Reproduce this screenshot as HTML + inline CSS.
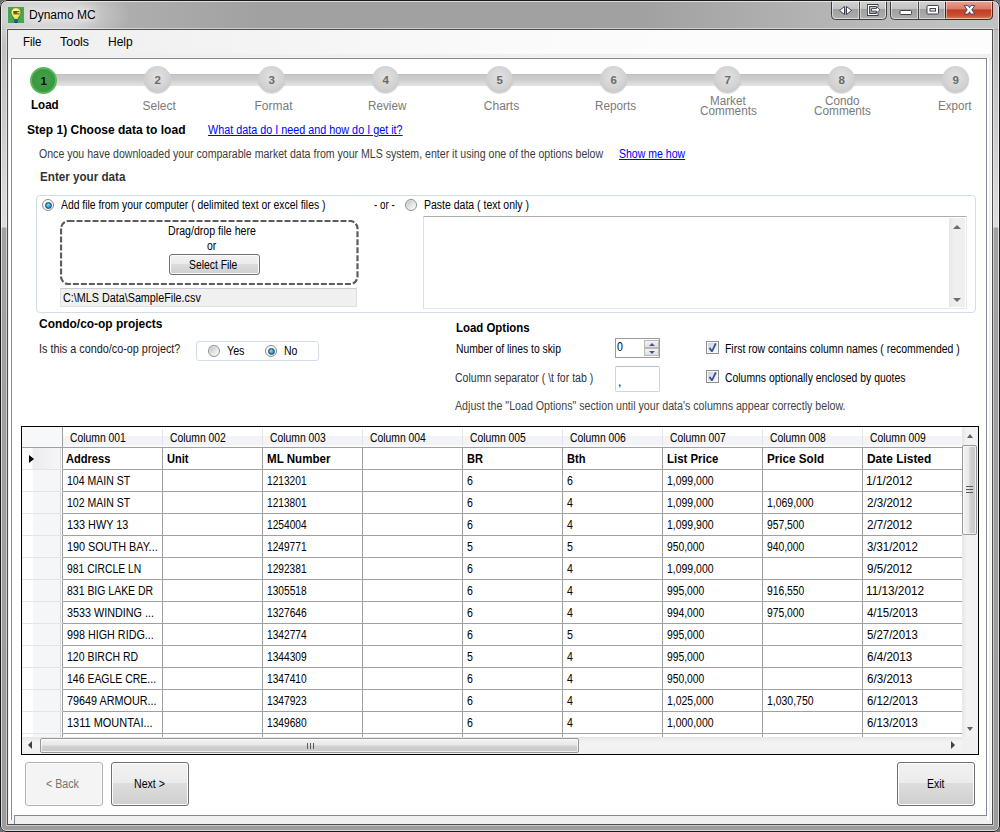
<!DOCTYPE html>
<html lang="en"><head><meta charset="utf-8"><title>Dynamo MC</title>
<style>
*{box-sizing:border-box}
html,body{margin:0;padding:0}
body{width:1000px;height:832px;overflow:hidden;background:#6e6e6e;font-family:"Liberation Sans",sans-serif;font-size:11px;color:#000}
#win{position:absolute;left:0;top:0;width:1000px;height:832px;border-radius:7px 7px 6px 6px;overflow:hidden;
 background:linear-gradient(180deg,#a1a1a1 0,#a1a1a1 30px,#bcbcbc 30px,#dedede 227px,#a2a2a2 228px,#9c9c9c 100%)}
#win:before{content:"";position:absolute;left:1px;top:1px;right:1px;bottom:1px;border:1px solid rgba(255,255,255,.62);border-radius:6px 6px 5px 5px;z-index:3;pointer-events:none}
#win:after{content:"";position:absolute;left:0;top:0;right:0;bottom:0;border:1px solid #1a1a1a;border-radius:7px 7px 6px 6px;z-index:4;pointer-events:none}
#tglow{position:absolute;left:-40px;top:-22px;width:170px;height:74px;background:radial-gradient(ellipse closest-side at center,rgba(224,224,224,.95) 0,rgba(222,222,222,.9) 45%,rgba(210,210,210,.5) 72%,rgba(190,190,190,0) 100%)}
#tright{position:absolute;left:0;top:0;width:1000px;height:29px;background:linear-gradient(90deg,rgba(205,205,205,.3) 0,rgba(205,205,205,.3) 120px,rgba(205,205,205,0) 260px,rgba(205,205,205,0) 640px,rgba(205,205,205,.75) 960px)}
#tbottom{position:absolute;left:0;top:825px;width:1000px;height:7px;background:#9d9d9d}
#inner{position:absolute;left:7px;top:29px;width:986px;height:796px;border:1px solid #4f4f4f;box-shadow:0 0 0 1px rgba(255,255,255,.45),inset -1px 0 0 #fff;background:#f0f0f0}
#panel{position:absolute;left:11px;top:58px;width:976px;height:762px;border:1px solid #828a99;border-bottom:0;background:#fff;box-shadow:2px 0 0 #fff,-2px 0 0 #fff}
#pbot{position:absolute;left:14px;top:815px;width:973px;height:9px;border-top:1px solid #828a99;border-left:1px solid #828a99;background:#f0f0f0}
#menu{position:absolute;left:8px;top:30px;width:984px;height:24px;background:linear-gradient(90deg,#f0f0f0 0,#f1f1f1 12%,#f5f5f5 30%,#fafafa 50%,#fcfcfc 70%,#fdfdfd 100%)}
.t{position:absolute;white-space:nowrap;line-height:1;z-index:5;transform-origin:0 0}
/* caption buttons */
.cap{position:absolute;top:0}
/* steps */
#steps{position:absolute;left:0;top:0}
.track{position:absolute;left:44px;top:73.5px;width:912px;height:12.5px;background:linear-gradient(180deg,#bdbdbd 0,#c8c8c8 12%,#cdcdcd 45%,#e3e3e3 100%)}
.dot{position:absolute;top:66px;width:27px;height:27px;border-radius:50%;background:radial-gradient(circle at 50% 40%,#e2e2e2 0,#d2d2d2 55%,#c0c0c0 100%);box-shadow:0 1px 1px rgba(0,0,0,.12);text-align:center}
.dot b{display:block;font-size:11.5px;line-height:29px;color:#6a6a6a;font-weight:700}
.dot.on{top:66.6px;background:radial-gradient(circle at 50% 45%,#43a048 0,#3a9840 70%,#369239 100%);border:2px solid #5ab85f;box-shadow:none}
.dot.on b{line-height:25px;color:#0a0a0a}
.slab{position:absolute;width:100px;text-align:center;font-size:12px;line-height:14px;color:#7a7a7a}
.slab.on{font-weight:700;color:#000;font-size:12px}
.slab.two{line-height:10px}
/* group boxes */
.gb{position:absolute;border:1px solid #d3dde6;border-radius:4px;background:#fff}
.radio{position:absolute;width:12px;height:12px;border-radius:50%;border:1px solid #8a8d90;background:linear-gradient(135deg,#b7bbbf 0,#dcdee0 45%,#f6f6f6 82%);box-shadow:inset 0 0 0 1px rgba(255,255,255,.55)}
.radio.on{background:#f6f6f6}
.radio.on:after{content:"";box-sizing:border-box;position:absolute;left:1.5px;top:1.5px;width:7px;height:7px;border-radius:50%;border:1.3px solid #1b415f;background:radial-gradient(circle at 42% 38%,#9fe3f7 0,#2f9fdb 45%,#1e7fbe 100%)}
.chk{position:absolute;width:13px;height:13px;border:1px solid #8e8f8f;background:linear-gradient(135deg,#c2c7d0 0,#e6e8ec 50%,#fbfbfb 100%);box-shadow:inset 0 0 0 1px #f8f8f8}
.chk svg{position:absolute;left:0;top:0}
.btn{position:absolute;border:1px solid #707070;border-radius:3px;box-shadow:inset 0 0 0 1px #fcfcfc;background:linear-gradient(180deg,#f2f2f2 0,#ebebeb 47%,#dddddd 48%,#cfcfcf 100%)}
.btn.dis{border-color:#adb2b5;background:#f4f4f4}
.drop{position:absolute;left:59.5px;top:219.5px}
.ro{position:absolute;left:60px;top:288px;width:297px;height:19px;background:#f0f0f0;border:1px solid #dcdfe4;border-top-color:#c8cbd2}
.ta{position:absolute;left:423px;top:216px;width:544px;height:93px;background:#fff;border:1px solid #e3e9ef;border-top-color:#abadb3;border-left-color:#dbdfe6;border-radius:1px}
.ta .sb{position:absolute;right:1px;top:1px;width:16px;bottom:1px;background:linear-gradient(90deg,#e6e6e6,#f0f0f0 35%,#efefef)}
.arr{position:absolute;width:0;height:0;border-style:solid}
.spin{position:absolute;left:615px;top:338px;width:45px;height:20px;border:1px solid #9b9b9b;background:#fff}
.spin .u,.spin .d{position:absolute;left:28px;width:15px;height:8px;border:1px solid #b9b9b9;background:linear-gradient(180deg,#f4f4f4,#dedede)}
.spin .u{top:1px}.spin .d{top:9px}
.sep{position:absolute;left:615px;top:366px;width:45px;height:26px;border:1px solid #c9d5e2;border-top-color:#b4bfcc;border-radius:2px;background:#fff}
/* grid */
#grid{position:absolute;left:21px;top:426px;width:958px;height:329px;border:1px solid #000;background:#fff;overflow:hidden;font-size:11px}
.ghead{position:absolute;left:0;top:0;width:940px;height:21px;border-bottom:1px solid #a0a0a0;background:linear-gradient(180deg,#fff 0,#fff 9px,#f3f4f7 9px,#f2f3f6 18px,#fbfbfc 18px,#fbfbfc 20px);overflow:hidden}
.corner{position:absolute;left:0;top:0;width:41px;height:20px;border-right:1px solid #a0a0a0;background:#f7f8fa}
.ch{position:absolute;top:2px;width:100px;height:17px;border-right:1px solid #e3e4e8}
.gr{position:absolute;left:0;width:940px;height:22px;overflow:hidden}
.gr.last{height:3px}
.rh{position:absolute;left:0;top:0;width:41px;height:22px;border-right:1px solid #a0a0a0;border-bottom:1px solid #e4e4e6;background:linear-gradient(90deg,#f6f6f6 0,#f6f6f6 1px,#fff 1px,#fff 11px,#f5f6f8 11px,#f5f6f8 38px,#d6d6d8 38px,#d6d6d8 39px,#fff 39px)}
.hd .rh{background:linear-gradient(90deg,#f6f6f6 0,#f6f6f6 1px,#fff 1px,#fff 10px,#ececee 11px,#f6f6f8 38px,#d6d6d8 38px,#d6d6d8 39px,#fff 39px)}
.rh i{position:absolute;left:7px;top:7px;width:0;height:0;border-style:solid;border-width:4.5px 0 4.5px 5px;border-color:transparent transparent transparent #000}
.c{position:absolute;top:0;width:100px;height:22px;border-right:1px solid #a0a0a0;border-bottom:1px solid #a0a0a0}
.vs{position:absolute;left:940px;top:0;width:16px;height:310px;background:linear-gradient(90deg,#e6e6e6,#f3f3f3 30%,#f0f0f0)}
.hs{position:absolute;left:0;top:310px;width:940px;height:17px;background:linear-gradient(180deg,#e6e6e6,#f3f3f3 30%,#f0f0f0)}
.scorner{position:absolute;left:940px;top:310px;width:16px;height:17px;background:#f0f0f0}
.thumbv{position:absolute;left:0;top:18px;width:15px;height:90px;border:1px solid #979797;border-radius:2px;background:linear-gradient(90deg,#f3f3f3 0,#e8e8e9 45%,#d1d1d3 55%,#c8c8ca 100%);box-shadow:inset 0 0 0 1px rgba(255,255,255,.7)}
.thumbh{position:absolute;left:18px;top:1px;width:539px;height:15px;border:1px solid #979797;border-radius:2px;background:linear-gradient(180deg,#f3f3f3 0,#e8e8e9 45%,#d1d1d3 55%,#c8c8ca 100%);box-shadow:inset 0 0 0 1px rgba(255,255,255,.7)}
.grip{position:absolute;background:#5a5a5a}

</style></head>
<body>
<div id="win">
<div id="tglow"></div><div id="tright"></div><div id="tbottom"></div>
<div id="inner"></div>
<div id="menu"></div>
<div id="panel"></div><div id="pbot"></div>
<!-- app icon -->
<svg style="position:absolute;left:8px;top:7px" width="16" height="16" viewBox="0 0 16 16">
<defs><radialGradient id="bulb" cx=".45" cy=".35" r=".75"><stop offset="0" stop-color="#fffbd0"/><stop offset=".45" stop-color="#fbee6e"/><stop offset="1" stop-color="#e9d23f"/></radialGradient></defs>
<rect width="16" height="16" fill="#47a64f"/>
<path d="M8 .6C4.900 .6 3 2.800 3 5.300c0 1.900 1 3.100 1.800 4.300.6.900 1 1.800 1.100 2.800h4.200c.1-1 .5-1.900 1.100-2.800C12 8.400 13 7.200 13 5.300 13 2.800 11.100 .6 8 .6z" fill="url(#bulb)" stroke="#2c6a35" stroke-width=".7"/>
<path d="M5.400 3.900h6v3.700h-6z" fill="#6a5b16" opacity=".92"/><path d="M9.300 5.100h2.200v1.200h-2.200z" fill="#f4e25a"/>
<path d="M5.400 4.900h3.300" stroke="#3a300a" stroke-width=".8"/>
<rect x="6" y="12.400" width="4" height="2.500" fill="#1c5ba3"/>
<path d="M6.300 14.900h3.400l-.7 1h-2z" fill="#0f3358"/>
</svg>
<!-- caption buttons -->
<svg class="cap" style="left:830px" width="166" height="21" viewBox="0 0 166 21">
<defs>
<linearGradient id="gb" x1="0" y1="0" x2="0" y2="1"><stop offset="0" stop-color="#d6d6d6"/><stop offset=".47" stop-color="#c3c3c3"/><stop offset=".5" stop-color="#9f9f9f"/><stop offset="1" stop-color="#b0b0b0"/></linearGradient>
<linearGradient id="gr" x1="0" y1="0" x2="0" y2="1"><stop offset="0" stop-color="#eda697"/><stop offset=".47" stop-color="#d97a69"/><stop offset=".5" stop-color="#c13c21"/><stop offset=".8" stop-color="#cb5033"/><stop offset="1" stop-color="#de8663"/></linearGradient>
</defs>
<!-- group 1 -->
<path d="M1.500 -1V15.500a4 4 0 0 0 4 4H52.500a4 4 0 0 0 4-4V-1z" fill="url(#gb)" stroke="#3e3e3e"/>
<path d="M2.500 0V15.300a3.200 3.200 0 0 0 3.200 3.200H52.300a3.200 3.200 0 0 0 3.200-3.200V0" fill="none" stroke="rgba(255,255,255,.55)"/>
<path d="M29.500 0V19" stroke="#4a4a4a"/><path d="M28.500 1V18M30.500 1V18" stroke="rgba(255,255,255,.45)"/>
<path d="M14.500 6.500v8l-5-4zM16.500 6.500v8l5-4z" fill="#fff" stroke="#3d4150" stroke-width="1" stroke-linejoin="round"/>
<path d="M47 7V5.500h-8.500v9h8.500V12.500" fill="none" stroke="#3d4150" stroke-width="3"/><path d="M47 7V5.500h-8.500v9h8.500V12.500" fill="none" stroke="#fff" stroke-width="1.200"/>
<path d="M41.500 8.500h5v-2l3.500 3.300-3.500 3.300v-2h-5z" fill="#fff" stroke="#3d4150" stroke-width=".9"/>
<!-- group 2 -->
<path d="M60.500 -1V15.500a4 4 0 0 0 4 4H158.500a4 4 0 0 0 4-4V-1z" fill="url(#gb)" stroke="#3e3e3e"/>
<path d="M115.500 0H162.500V15.500a4 4 0 0 1-4 4H115.500z" fill="url(#gr)" stroke="#5a1f14"/>
<path d="M61.500 0V15.300a3.200 3.200 0 0 0 3.200 3.200H158.300a3.200 3.200 0 0 0 3.200-3.200V0" fill="none" stroke="rgba(255,255,255,.5)"/>
<path d="M88.500 0V19" stroke="#4a4a4a"/><path d="M87.500 1V18M89.500 1V18" stroke="rgba(255,255,255,.45)"/>
<path d="M116.500 1V18" stroke="rgba(255,255,255,.45)"/><path d="M114.500 1V18" stroke="rgba(255,255,255,.45)"/>
<rect x="70" y="10.500" width="11.500" height="4" rx=".8" fill="#fff" stroke="#3d4150"/>
<rect x="97" y="5.500" width="11.500" height="8.500" rx=".8" fill="#fff" stroke="#3d4150"/><rect x="100" y="8.500" width="5.500" height="2.600" fill="#e8e8e8" stroke="#3d4150"/>
<path d="M134.200 5.600L138.300 5.600 139.500 7.800 140.700 5.600 144.800 5.600 141.800 9.800 144.800 14 140.700 14 139.500 11.800 138.300 14 134.200 14 137.200 9.800z" fill="#fff" stroke="#454b60" stroke-width="1" stroke-linejoin="round"/>
</svg>
<div id="steps"><div class="track"></div>
<div class="dot on" style="left:30.2px"><b>1</b></div>
<div class="dot" style="left:144.2px"><b>2</b></div>
<div class="dot" style="left:258.2px"><b>3</b></div>
<div class="dot" style="left:372.2px"><b>4</b></div>
<div class="dot" style="left:486.2px"><b>5</b></div>
<div class="dot" style="left:600.2px"><b>6</b></div>
<div class="dot" style="left:714.2px"><b>7</b></div>
<div class="dot" style="left:828.2px"><b>8</b></div>
<div class="dot" style="left:942.2px"><b>9</b></div></div>
<!-- enter-your-data group -->
<div class="gb" style="left:36px;top:195px;width:940px;height:118px"></div>
<div class="radio on" style="left:42px;top:199px"></div>
<div class="radio" style="left:405px;top:199px"></div>
<svg class="drop" width="299" height="66" viewBox="0 0 299 66"><rect x="1" y="1" width="296.500" height="63" rx="7.500" ry="7.500" fill="none" stroke="#5c5c5c" stroke-width="2.200" stroke-dasharray="6 2"/></svg>
<div class="btn" style="left:169px;top:254px;width:91px;height:21px"></div>
<div class="ro"></div>
<div class="ta"><div class="sb"><span class="arr" style="left:4px;top:6.500px;border-width:0 4px 4.300px 4px;border-color:transparent transparent #6d6d6d transparent"></span><span class="arr" style="left:4px;bottom:5.500px;border-width:4.300px 4px 0 4px;border-color:#6d6d6d transparent transparent transparent"></span></div></div>
<!-- condo group -->
<div class="gb" style="left:196px;top:341px;width:123px;height:20px;border-radius:3px"></div>
<div class="radio" style="left:208px;top:345px"></div>
<div class="radio on" style="left:265px;top:345px"></div>
<!-- load options -->
<div class="spin"><div class="u"><span class="arr" style="left:3.500px;top:1.500px;border-width:0 3px 3px 3px;border-color:transparent transparent #44549a transparent"></span></div><div class="d"><span class="arr" style="left:3.500px;top:1.500px;border-width:3px 3px 0 3px;border-color:#44549a transparent transparent transparent"></span></div></div>
<div class="sep"></div>
<div class="chk" style="left:706px;top:341px"><svg width="11" height="11" viewBox="0 0 11 11"><path d="M1.700 6.500L3.100 5.300 4.900 7.400 7.900 .9 9.700 1.700 5.600 9.900 4.300 9.900z" fill="#3c539b"/></svg></div>
<div class="chk" style="left:706px;top:370px"><svg width="11" height="11" viewBox="0 0 11 11"><path d="M1.700 6.500L3.100 5.300 4.900 7.400 7.900 .9 9.700 1.700 5.600 9.900 4.300 9.900z" fill="#3c539b"/></svg></div>
<!-- nav buttons -->
<div class="btn dis" style="left:25px;top:762px;width:78px;height:44px"></div>
<div class="btn" style="left:111px;top:762px;width:78px;height:44px"></div>
<div class="btn" style="left:897px;top:762px;width:78px;height:44px"></div>
<div id="grid">
<div class="ghead"><div class="corner"></div>
<div class="ch" style="left:41px"></div>
<div class="ch" style="left:141px"></div>
<div class="ch" style="left:241px"></div>
<div class="ch" style="left:341px"></div>
<div class="ch" style="left:441px"></div>
<div class="ch" style="left:541px"></div>
<div class="ch" style="left:641px"></div>
<div class="ch" style="left:741px"></div>
<div class="ch" style="left:841px"></div>
</div>
<div class="gr hd" style="top:21px"><div class="rh"><i></i></div>
<div class="c" style="left:41px"></div>
<div class="c" style="left:141px"></div>
<div class="c" style="left:241px"></div>
<div class="c" style="left:341px"></div>
<div class="c" style="left:441px"></div>
<div class="c" style="left:541px"></div>
<div class="c" style="left:641px"></div>
<div class="c" style="left:741px"></div>
<div class="c" style="left:841px"></div>
</div>
<div class="gr" style="top:43px"><div class="rh"></div>
<div class="c" style="left:41px"></div>
<div class="c" style="left:141px"></div>
<div class="c" style="left:241px"></div>
<div class="c" style="left:341px"></div>
<div class="c" style="left:441px"></div>
<div class="c" style="left:541px"></div>
<div class="c" style="left:641px"></div>
<div class="c" style="left:741px"></div>
<div class="c" style="left:841px"></div>
</div>
<div class="gr" style="top:65px"><div class="rh"></div>
<div class="c" style="left:41px"></div>
<div class="c" style="left:141px"></div>
<div class="c" style="left:241px"></div>
<div class="c" style="left:341px"></div>
<div class="c" style="left:441px"></div>
<div class="c" style="left:541px"></div>
<div class="c" style="left:641px"></div>
<div class="c" style="left:741px"></div>
<div class="c" style="left:841px"></div>
</div>
<div class="gr" style="top:87px"><div class="rh"></div>
<div class="c" style="left:41px"></div>
<div class="c" style="left:141px"></div>
<div class="c" style="left:241px"></div>
<div class="c" style="left:341px"></div>
<div class="c" style="left:441px"></div>
<div class="c" style="left:541px"></div>
<div class="c" style="left:641px"></div>
<div class="c" style="left:741px"></div>
<div class="c" style="left:841px"></div>
</div>
<div class="gr" style="top:109px"><div class="rh"></div>
<div class="c" style="left:41px"></div>
<div class="c" style="left:141px"></div>
<div class="c" style="left:241px"></div>
<div class="c" style="left:341px"></div>
<div class="c" style="left:441px"></div>
<div class="c" style="left:541px"></div>
<div class="c" style="left:641px"></div>
<div class="c" style="left:741px"></div>
<div class="c" style="left:841px"></div>
</div>
<div class="gr" style="top:131px"><div class="rh"></div>
<div class="c" style="left:41px"></div>
<div class="c" style="left:141px"></div>
<div class="c" style="left:241px"></div>
<div class="c" style="left:341px"></div>
<div class="c" style="left:441px"></div>
<div class="c" style="left:541px"></div>
<div class="c" style="left:641px"></div>
<div class="c" style="left:741px"></div>
<div class="c" style="left:841px"></div>
</div>
<div class="gr" style="top:153px"><div class="rh"></div>
<div class="c" style="left:41px"></div>
<div class="c" style="left:141px"></div>
<div class="c" style="left:241px"></div>
<div class="c" style="left:341px"></div>
<div class="c" style="left:441px"></div>
<div class="c" style="left:541px"></div>
<div class="c" style="left:641px"></div>
<div class="c" style="left:741px"></div>
<div class="c" style="left:841px"></div>
</div>
<div class="gr" style="top:175px"><div class="rh"></div>
<div class="c" style="left:41px"></div>
<div class="c" style="left:141px"></div>
<div class="c" style="left:241px"></div>
<div class="c" style="left:341px"></div>
<div class="c" style="left:441px"></div>
<div class="c" style="left:541px"></div>
<div class="c" style="left:641px"></div>
<div class="c" style="left:741px"></div>
<div class="c" style="left:841px"></div>
</div>
<div class="gr" style="top:197px"><div class="rh"></div>
<div class="c" style="left:41px"></div>
<div class="c" style="left:141px"></div>
<div class="c" style="left:241px"></div>
<div class="c" style="left:341px"></div>
<div class="c" style="left:441px"></div>
<div class="c" style="left:541px"></div>
<div class="c" style="left:641px"></div>
<div class="c" style="left:741px"></div>
<div class="c" style="left:841px"></div>
</div>
<div class="gr" style="top:219px"><div class="rh"></div>
<div class="c" style="left:41px"></div>
<div class="c" style="left:141px"></div>
<div class="c" style="left:241px"></div>
<div class="c" style="left:341px"></div>
<div class="c" style="left:441px"></div>
<div class="c" style="left:541px"></div>
<div class="c" style="left:641px"></div>
<div class="c" style="left:741px"></div>
<div class="c" style="left:841px"></div>
</div>
<div class="gr" style="top:241px"><div class="rh"></div>
<div class="c" style="left:41px"></div>
<div class="c" style="left:141px"></div>
<div class="c" style="left:241px"></div>
<div class="c" style="left:341px"></div>
<div class="c" style="left:441px"></div>
<div class="c" style="left:541px"></div>
<div class="c" style="left:641px"></div>
<div class="c" style="left:741px"></div>
<div class="c" style="left:841px"></div>
</div>
<div class="gr" style="top:263px"><div class="rh"></div>
<div class="c" style="left:41px"></div>
<div class="c" style="left:141px"></div>
<div class="c" style="left:241px"></div>
<div class="c" style="left:341px"></div>
<div class="c" style="left:441px"></div>
<div class="c" style="left:541px"></div>
<div class="c" style="left:641px"></div>
<div class="c" style="left:741px"></div>
<div class="c" style="left:841px"></div>
</div>
<div class="gr" style="top:285px"><div class="rh"></div>
<div class="c" style="left:41px"></div>
<div class="c" style="left:141px"></div>
<div class="c" style="left:241px"></div>
<div class="c" style="left:341px"></div>
<div class="c" style="left:441px"></div>
<div class="c" style="left:541px"></div>
<div class="c" style="left:641px"></div>
<div class="c" style="left:741px"></div>
<div class="c" style="left:841px"></div>
</div>
<div class="gr last" style="top:307px"><div class="rh"></div>
<div class="c" style="left:41px"></div>
<div class="c" style="left:141px"></div>
<div class="c" style="left:241px"></div>
<div class="c" style="left:341px"></div>
<div class="c" style="left:441px"></div>
<div class="c" style="left:541px"></div>
<div class="c" style="left:641px"></div>
<div class="c" style="left:741px"></div>
<div class="c" style="left:841px"></div>
</div>
<div class="vs"><span class="arr" style="left:4.800px;top:7px;border-width:0 3.600px 4.200px 3.600px;border-color:transparent transparent #606060 transparent"></span><div class="thumbv"><span class="grip" style="left:3px;top:40px;width:7px;height:1px"></span><span class="grip" style="left:3px;top:43px;width:7px;height:1px"></span><span class="grip" style="left:3px;top:46px;width:7px;height:1px"></span></div><span class="arr" style="left:4.800px;top:300px;border-width:4.200px 3.600px 0 3.600px;border-color:#606060 transparent transparent transparent"></span></div>
<div class="hs"><span class="arr" style="left:6px;top:4px;border-width:4px 4px 4px 0;border-color:transparent #404040 transparent transparent"></span><div class="thumbh"><span class="grip" style="left:266px;top:4px;width:1px;height:6px"></span><span class="grip" style="left:269px;top:4px;width:1px;height:6px"></span><span class="grip" style="left:272px;top:4px;width:1px;height:6px"></span></div><span class="arr" style="left:929px;top:4px;border-width:4px 0 4px 4px;border-color:transparent transparent transparent #404040"></span></div>
<div class="scorner"></div>

</div><div id="texts">
<span class="t" id="t0" style="left:29.0px;top:8.90px;font-size:12px;text-shadow:0 0 6px #fff,0 0 10px #fff;">Dynamo MC</span>
<span class="t" id="t1" style="left:23.0px;top:36.20px;font-size:12px;transform:scaleX(0.9500);">File</span>
<span class="t" id="t2" style="left:60.0px;top:36.20px;font-size:12px;transform:scaleX(1.0357);">Tools</span>
<span class="t" id="t3" style="left:108.0px;top:36.20px;font-size:12px;">Help</span>
<span class="t" id="t4" style="left:27.0px;top:123.96px;font-size:12.3px;font-weight:700;transform:scaleX(0.9790);">Step 1) Choose data to load</span>
<span class="t" id="t5" style="left:208.0px;top:123.96px;font-size:12.3px;color:#0000ff;transform:scaleX(0.8784);text-decoration:underline;">What data do I need and how do I get it?</span>
<span class="t" id="t6" style="left:39.0px;top:147.96px;font-size:12.3px;color:#3c3c3c;transform:scaleX(0.8597);">Once you have downloaded your comparable market data from your MLS system, enter it using one of the options below</span>
<span class="t" id="t7" style="left:618.5px;top:147.96px;font-size:12.3px;color:#0000ff;transform:scaleX(0.8557);text-decoration:underline;">Show me how</span>
<span class="t" id="t8" style="left:39.5px;top:170.96px;font-size:12.3px;font-weight:700;color:#333;transform:scaleX(0.9468);">Enter your data</span>
<span class="t" id="t9" style="left:61.0px;top:198.96px;font-size:12.3px;transform:scaleX(0.8430);">Add file from your computer ( delimited text or excel files )</span>
<span class="t" id="t10" style="left:374.0px;top:198.96px;font-size:12.3px;transform:scaleX(0.8000);">- or -</span>
<span class="t" id="t11" style="left:424.0px;top:198.96px;font-size:12.3px;transform:scaleX(0.8537);">Paste data ( text only )</span>
<span class="t" id="t12" style="left:168.0px;top:224.96px;font-size:12.3px;transform:scaleX(0.8627);">Drag/drop file here</span>
<span class="t" id="t13" style="left:207.0px;top:239.96px;font-size:12.3px;transform:scaleX(0.8500);">or</span>
<span class="t" id="t14" style="left:189.0px;top:258.96px;font-size:12.3px;transform:scaleX(0.8421);">Select File</span>
<span class="t" id="t15" style="left:63.0px;top:291.96px;font-size:12.3px;transform:scaleX(0.8765);">C:\MLS Data\SampleFile.csv</span>
<span class="t" id="t16" style="left:38.5px;top:317.96px;font-size:12.3px;font-weight:700;transform:scaleX(0.9717);">Condo/co-op projects</span>
<span class="t" id="t17" style="left:39.0px;top:342.96px;font-size:12.3px;color:#222;transform:scaleX(0.8800);">Is this a condo/co-op project?</span>
<span class="t" id="t18" style="left:227.0px;top:344.96px;font-size:12.3px;transform:scaleX(0.8710);">Yes</span>
<span class="t" id="t19" style="left:284.0px;top:344.96px;font-size:12.3px;transform:scaleX(0.8500);">No</span>
<span class="t" id="t20" style="left:456.0px;top:321.96px;font-size:12.3px;font-weight:700;transform:scaleX(0.9292);">Load Options</span>
<span class="t" id="t21" style="left:456.0px;top:342.96px;font-size:12.3px;transform:scaleX(0.8384);">Number of lines to skip</span>
<span class="t" id="t22" style="left:455.0px;top:371.96px;font-size:12.3px;color:#333;transform:scaleX(0.8571);">Column separator ( \t for tab )</span>
<span class="t" id="t23" style="left:455.0px;top:399.96px;font-size:12.3px;color:#444;transform:scaleX(0.8667);">Adjust the "Load Options" section until your data's columns appear correctly below.</span>
<span class="t" id="t24" style="left:617.0px;top:340.96px;font-size:12.3px;transform:scaleX(0.8600);">0</span>
<span class="t" id="t25" style="left:618.0px;top:375.96px;font-size:12.3px;">,</span>
<span class="t" id="t26" style="left:725.0px;top:342.96px;font-size:12.3px;transform:scaleX(0.8483);">First row contains column names ( recommended )</span>
<span class="t" id="t27" style="left:725.0px;top:371.96px;font-size:12.3px;transform:scaleX(0.8458);">Columns optionally enclosed by quotes</span>
<span class="t" id="t28" style="left:46.0px;top:777.96px;font-size:12.3px;color:#737373;transform:scaleX(0.8688);">&lt; Back</span>
<span class="t" id="t29" style="left:134.0px;top:777.96px;font-size:12.3px;transform:scaleX(0.8611);">Next &gt;</span>
<span class="t" id="t30" style="left:927.0px;top:777.96px;font-size:12.3px;transform:scaleX(0.8500);">Exit</span>
<span class="t" id="t31" style="left:31.2px;top:99.20px;font-size:12px;font-weight:700;transform:scaleX(0.9660);">Load</span>
<span class="t" id="t32" style="left:142.5px;top:100.20px;font-size:12px;color:#7a7a7a;">Select</span>
<span class="t" id="t33" style="left:254.5px;top:100.20px;font-size:12px;color:#7a7a7a;">Format</span>
<span class="t" id="t34" style="left:368.2px;top:100.20px;font-size:12px;color:#7a7a7a;transform:scaleX(0.9752);">Review</span>
<span class="t" id="t35" style="left:483.8px;top:100.20px;font-size:12px;color:#7a7a7a;">Charts</span>
<span class="t" id="t36" style="left:595.0px;top:100.20px;font-size:12px;color:#7a7a7a;transform:scaleX(0.9764);">Reports</span>
<span class="t" id="t37" style="left:710.0px;top:95.20px;font-size:12px;color:#7a7a7a;transform:scaleX(0.9730);">Market</span>
<span class="t" id="t38" style="left:699.5px;top:105.20px;font-size:12px;color:#7a7a7a;transform:scaleX(0.9794);">Comments</span>
<span class="t" id="t39" style="left:825.0px;top:95.20px;font-size:12px;color:#7a7a7a;transform:scaleX(0.9726);">Condo</span>
<span class="t" id="t40" style="left:813.5px;top:105.20px;font-size:12px;color:#7a7a7a;transform:scaleX(0.9828);">Comments</span>
<span class="t" id="t41" style="left:938.0px;top:100.20px;font-size:12px;color:#7a7a7a;transform:scaleX(0.9661);">Export</span>
<span class="t" id="t42" style="left:70.0px;top:431.96px;font-size:12.3px;transform:scaleX(0.8424);">Column 001</span>
<span class="t" id="t43" style="left:170.0px;top:431.96px;font-size:12.3px;transform:scaleX(0.8424);">Column 002</span>
<span class="t" id="t44" style="left:270.0px;top:431.96px;font-size:12.3px;transform:scaleX(0.8424);">Column 003</span>
<span class="t" id="t45" style="left:370.0px;top:431.96px;font-size:12.3px;transform:scaleX(0.8424);">Column 004</span>
<span class="t" id="t46" style="left:470.0px;top:431.96px;font-size:12.3px;transform:scaleX(0.8424);">Column 005</span>
<span class="t" id="t47" style="left:570.0px;top:431.96px;font-size:12.3px;transform:scaleX(0.8424);">Column 006</span>
<span class="t" id="t48" style="left:670.0px;top:431.96px;font-size:12.3px;transform:scaleX(0.8424);">Column 007</span>
<span class="t" id="t49" style="left:770.0px;top:431.96px;font-size:12.3px;transform:scaleX(0.8424);">Column 008</span>
<span class="t" id="t50" style="left:870.0px;top:431.96px;font-size:12.3px;transform:scaleX(0.8424);">Column 009</span>
<span class="t" id="t51" style="left:66.0px;top:452.96px;font-size:12.3px;font-weight:700;transform:scaleX(0.9000);">Address</span>
<span class="t" id="t52" style="left:167.0px;top:452.96px;font-size:12.3px;font-weight:700;transform:scaleX(0.9000);">Unit</span>
<span class="t" id="t53" style="left:267.0px;top:452.96px;font-size:12.3px;font-weight:700;transform:scaleX(0.9413);">ML Number</span>
<span class="t" id="t54" style="left:467.0px;top:452.96px;font-size:12.3px;font-weight:700;transform:scaleX(0.9000);">BR</span>
<span class="t" id="t55" style="left:567.0px;top:452.96px;font-size:12.3px;font-weight:700;transform:scaleX(0.9000);">Bth</span>
<span class="t" id="t56" style="left:667.0px;top:452.96px;font-size:12.3px;font-weight:700;transform:scaleX(0.9274);">List Price</span>
<span class="t" id="t57" style="left:767.0px;top:452.96px;font-size:12.3px;font-weight:700;transform:scaleX(0.9500);">Price Sold</span>
<span class="t" id="t58" style="left:867.0px;top:452.96px;font-size:12.3px;font-weight:700;transform:scaleX(0.9697);">Date Listed</span>
<span class="t" id="t59" style="left:67.0px;top:474.96px;font-size:12.3px;transform:scaleX(0.8568);">104 MAIN ST</span>
<span class="t" id="t60" style="left:267.0px;top:474.96px;font-size:12.3px;transform:scaleX(0.8258);">1213201</span>
<span class="t" id="t61" style="left:467.0px;top:474.96px;font-size:12.3px;transform:scaleX(0.8600);">6</span>
<span class="t" id="t62" style="left:567.0px;top:474.96px;font-size:12.3px;transform:scaleX(0.8600);">6</span>
<span class="t" id="t63" style="left:667.0px;top:474.96px;font-size:12.3px;transform:scaleX(0.8511);">1,099,000</span>
<span class="t" id="t64" style="left:866.0px;top:474.96px;font-size:12.3px;transform:scaleX(0.9674);">1/1/2012</span>
<span class="t" id="t65" style="left:67.0px;top:496.96px;font-size:12.3px;transform:scaleX(0.8568);">102 MAIN ST</span>
<span class="t" id="t66" style="left:267.0px;top:496.96px;font-size:12.3px;transform:scaleX(0.8258);">1213801</span>
<span class="t" id="t67" style="left:467.0px;top:496.96px;font-size:12.3px;transform:scaleX(0.8600);">6</span>
<span class="t" id="t68" style="left:567.0px;top:496.96px;font-size:12.3px;transform:scaleX(0.8600);">4</span>
<span class="t" id="t69" style="left:667.0px;top:496.96px;font-size:12.3px;transform:scaleX(0.8511);">1,099,000</span>
<span class="t" id="t70" style="left:767.0px;top:496.96px;font-size:12.3px;transform:scaleX(0.8511);">1,069,000</span>
<span class="t" id="t71" style="left:867.0px;top:496.96px;font-size:12.3px;transform:scaleX(0.9459);">2/3/2012</span>
<span class="t" id="t72" style="left:67.0px;top:518.96px;font-size:12.3px;transform:scaleX(0.8813);">133 HWY 13</span>
<span class="t" id="t73" style="left:267.0px;top:518.96px;font-size:12.3px;transform:scaleX(0.8293);">1254004</span>
<span class="t" id="t74" style="left:467.0px;top:518.96px;font-size:12.3px;transform:scaleX(0.8600);">6</span>
<span class="t" id="t75" style="left:567.0px;top:518.96px;font-size:12.3px;transform:scaleX(0.8600);">4</span>
<span class="t" id="t76" style="left:667.0px;top:518.96px;font-size:12.3px;transform:scaleX(0.8511);">1,099,900</span>
<span class="t" id="t77" style="left:767.0px;top:518.96px;font-size:12.3px;transform:scaleX(0.8402);">957,500</span>
<span class="t" id="t78" style="left:867.0px;top:518.96px;font-size:12.3px;transform:scaleX(0.9459);">2/7/2012</span>
<span class="t" id="t79" style="left:67.0px;top:540.96px;font-size:12.3px;transform:scaleX(0.8824);">190 SOUTH BAY...</span>
<span class="t" id="t80" style="left:267.0px;top:540.96px;font-size:12.3px;transform:scaleX(0.8258);">1249771</span>
<span class="t" id="t81" style="left:467.0px;top:540.96px;font-size:12.3px;transform:scaleX(0.8600);">5</span>
<span class="t" id="t82" style="left:567.0px;top:540.96px;font-size:12.3px;transform:scaleX(0.8600);">5</span>
<span class="t" id="t83" style="left:667.0px;top:540.96px;font-size:12.3px;transform:scaleX(0.8402);">950,000</span>
<span class="t" id="t84" style="left:767.0px;top:540.96px;font-size:12.3px;transform:scaleX(0.8402);">940,000</span>
<span class="t" id="t85" style="left:867.0px;top:540.96px;font-size:12.3px;transform:scaleX(0.9273);">3/31/2012</span>
<span class="t" id="t86" style="left:67.0px;top:562.96px;font-size:12.3px;transform:scaleX(0.8410);">981 CIRCLE LN</span>
<span class="t" id="t87" style="left:267.0px;top:562.96px;font-size:12.3px;transform:scaleX(0.8258);">1292381</span>
<span class="t" id="t88" style="left:467.0px;top:562.96px;font-size:12.3px;transform:scaleX(0.8600);">6</span>
<span class="t" id="t89" style="left:567.0px;top:562.96px;font-size:12.3px;transform:scaleX(0.8600);">4</span>
<span class="t" id="t90" style="left:667.0px;top:562.96px;font-size:12.3px;transform:scaleX(0.8511);">1,099,000</span>
<span class="t" id="t91" style="left:867.0px;top:562.96px;font-size:12.3px;transform:scaleX(0.9459);">9/5/2012</span>
<span class="t" id="t92" style="left:67.0px;top:584.96px;font-size:12.3px;transform:scaleX(0.8515);">831 BIG LAKE DR</span>
<span class="t" id="t93" style="left:267.0px;top:584.96px;font-size:12.3px;transform:scaleX(0.8293);">1305518</span>
<span class="t" id="t94" style="left:467.0px;top:584.96px;font-size:12.3px;transform:scaleX(0.8600);">6</span>
<span class="t" id="t95" style="left:567.0px;top:584.96px;font-size:12.3px;transform:scaleX(0.8600);">4</span>
<span class="t" id="t96" style="left:667.0px;top:584.96px;font-size:12.3px;transform:scaleX(0.8402);">995,000</span>
<span class="t" id="t97" style="left:767.0px;top:584.96px;font-size:12.3px;transform:scaleX(0.8402);">916,550</span>
<span class="t" id="t98" style="left:866.0px;top:584.96px;font-size:12.3px;transform:scaleX(0.9567);">11/13/2012</span>
<span class="t" id="t99" style="left:67.0px;top:606.96px;font-size:12.3px;transform:scaleX(0.8776);">3533 WINDING ...</span>
<span class="t" id="t100" style="left:267.0px;top:606.96px;font-size:12.3px;transform:scaleX(0.8293);">1327646</span>
<span class="t" id="t101" style="left:467.0px;top:606.96px;font-size:12.3px;transform:scaleX(0.8600);">6</span>
<span class="t" id="t102" style="left:567.0px;top:606.96px;font-size:12.3px;transform:scaleX(0.8600);">4</span>
<span class="t" id="t103" style="left:667.0px;top:606.96px;font-size:12.3px;transform:scaleX(0.8402);">994,000</span>
<span class="t" id="t104" style="left:767.0px;top:606.96px;font-size:12.3px;transform:scaleX(0.8402);">975,000</span>
<span class="t" id="t105" style="left:867.0px;top:606.96px;font-size:12.3px;transform:scaleX(0.9273);">4/15/2013</span>
<span class="t" id="t106" style="left:67.0px;top:628.96px;font-size:12.3px;transform:scaleX(0.8756);">998 HIGH RIDG...</span>
<span class="t" id="t107" style="left:267.0px;top:628.96px;font-size:12.3px;transform:scaleX(0.8293);">1342774</span>
<span class="t" id="t108" style="left:467.0px;top:628.96px;font-size:12.3px;transform:scaleX(0.8600);">6</span>
<span class="t" id="t109" style="left:567.0px;top:628.96px;font-size:12.3px;transform:scaleX(0.8600);">5</span>
<span class="t" id="t110" style="left:667.0px;top:628.96px;font-size:12.3px;transform:scaleX(0.8402);">995,000</span>
<span class="t" id="t111" style="left:867.0px;top:628.96px;font-size:12.3px;transform:scaleX(0.9273);">5/27/2013</span>
<span class="t" id="t112" style="left:67.0px;top:650.96px;font-size:12.3px;transform:scaleX(0.8531);">120 BIRCH RD</span>
<span class="t" id="t113" style="left:267.0px;top:650.96px;font-size:12.3px;transform:scaleX(0.8293);">1344309</span>
<span class="t" id="t114" style="left:467.0px;top:650.96px;font-size:12.3px;transform:scaleX(0.8600);">5</span>
<span class="t" id="t115" style="left:567.0px;top:650.96px;font-size:12.3px;transform:scaleX(0.8600);">4</span>
<span class="t" id="t116" style="left:667.0px;top:650.96px;font-size:12.3px;transform:scaleX(0.8402);">995,000</span>
<span class="t" id="t117" style="left:867.0px;top:650.96px;font-size:12.3px;transform:scaleX(0.9459);">6/4/2013</span>
<span class="t" id="t118" style="left:67.0px;top:672.96px;font-size:12.3px;transform:scaleX(0.8520);">146 EAGLE CRE...</span>
<span class="t" id="t119" style="left:267.0px;top:672.96px;font-size:12.3px;transform:scaleX(0.8293);">1347410</span>
<span class="t" id="t120" style="left:467.0px;top:672.96px;font-size:12.3px;transform:scaleX(0.8600);">6</span>
<span class="t" id="t121" style="left:567.0px;top:672.96px;font-size:12.3px;transform:scaleX(0.8600);">4</span>
<span class="t" id="t122" style="left:667.0px;top:672.96px;font-size:12.3px;transform:scaleX(0.8402);">950,000</span>
<span class="t" id="t123" style="left:867.0px;top:672.96px;font-size:12.3px;transform:scaleX(0.9459);">6/3/2013</span>
<span class="t" id="t124" style="left:67.0px;top:694.96px;font-size:12.3px;transform:scaleX(0.8792);">79649 ARMOUR...</span>
<span class="t" id="t125" style="left:267.0px;top:694.96px;font-size:12.3px;transform:scaleX(0.8293);">1347923</span>
<span class="t" id="t126" style="left:467.0px;top:694.96px;font-size:12.3px;transform:scaleX(0.8600);">6</span>
<span class="t" id="t127" style="left:567.0px;top:694.96px;font-size:12.3px;transform:scaleX(0.8600);">4</span>
<span class="t" id="t128" style="left:667.0px;top:694.96px;font-size:12.3px;transform:scaleX(0.8511);">1,025,000</span>
<span class="t" id="t129" style="left:767.0px;top:694.96px;font-size:12.3px;transform:scaleX(0.8511);">1,030,750</span>
<span class="t" id="t130" style="left:867.0px;top:694.96px;font-size:12.3px;transform:scaleX(0.9273);">6/12/2013</span>
<span class="t" id="t131" style="left:67.0px;top:716.96px;font-size:12.3px;transform:scaleX(0.8927);">1311 MOUNTAI...</span>
<span class="t" id="t132" style="left:267.0px;top:716.96px;font-size:12.3px;transform:scaleX(0.8293);">1349680</span>
<span class="t" id="t133" style="left:467.0px;top:716.96px;font-size:12.3px;transform:scaleX(0.8600);">6</span>
<span class="t" id="t134" style="left:567.0px;top:716.96px;font-size:12.3px;transform:scaleX(0.8600);">4</span>
<span class="t" id="t135" style="left:667.0px;top:716.96px;font-size:12.3px;transform:scaleX(0.8511);">1,000,000</span>
<span class="t" id="t136" style="left:867.0px;top:716.96px;font-size:12.3px;transform:scaleX(0.9273);">6/13/2013</span>
</div>
</div></div>
</body></html>
